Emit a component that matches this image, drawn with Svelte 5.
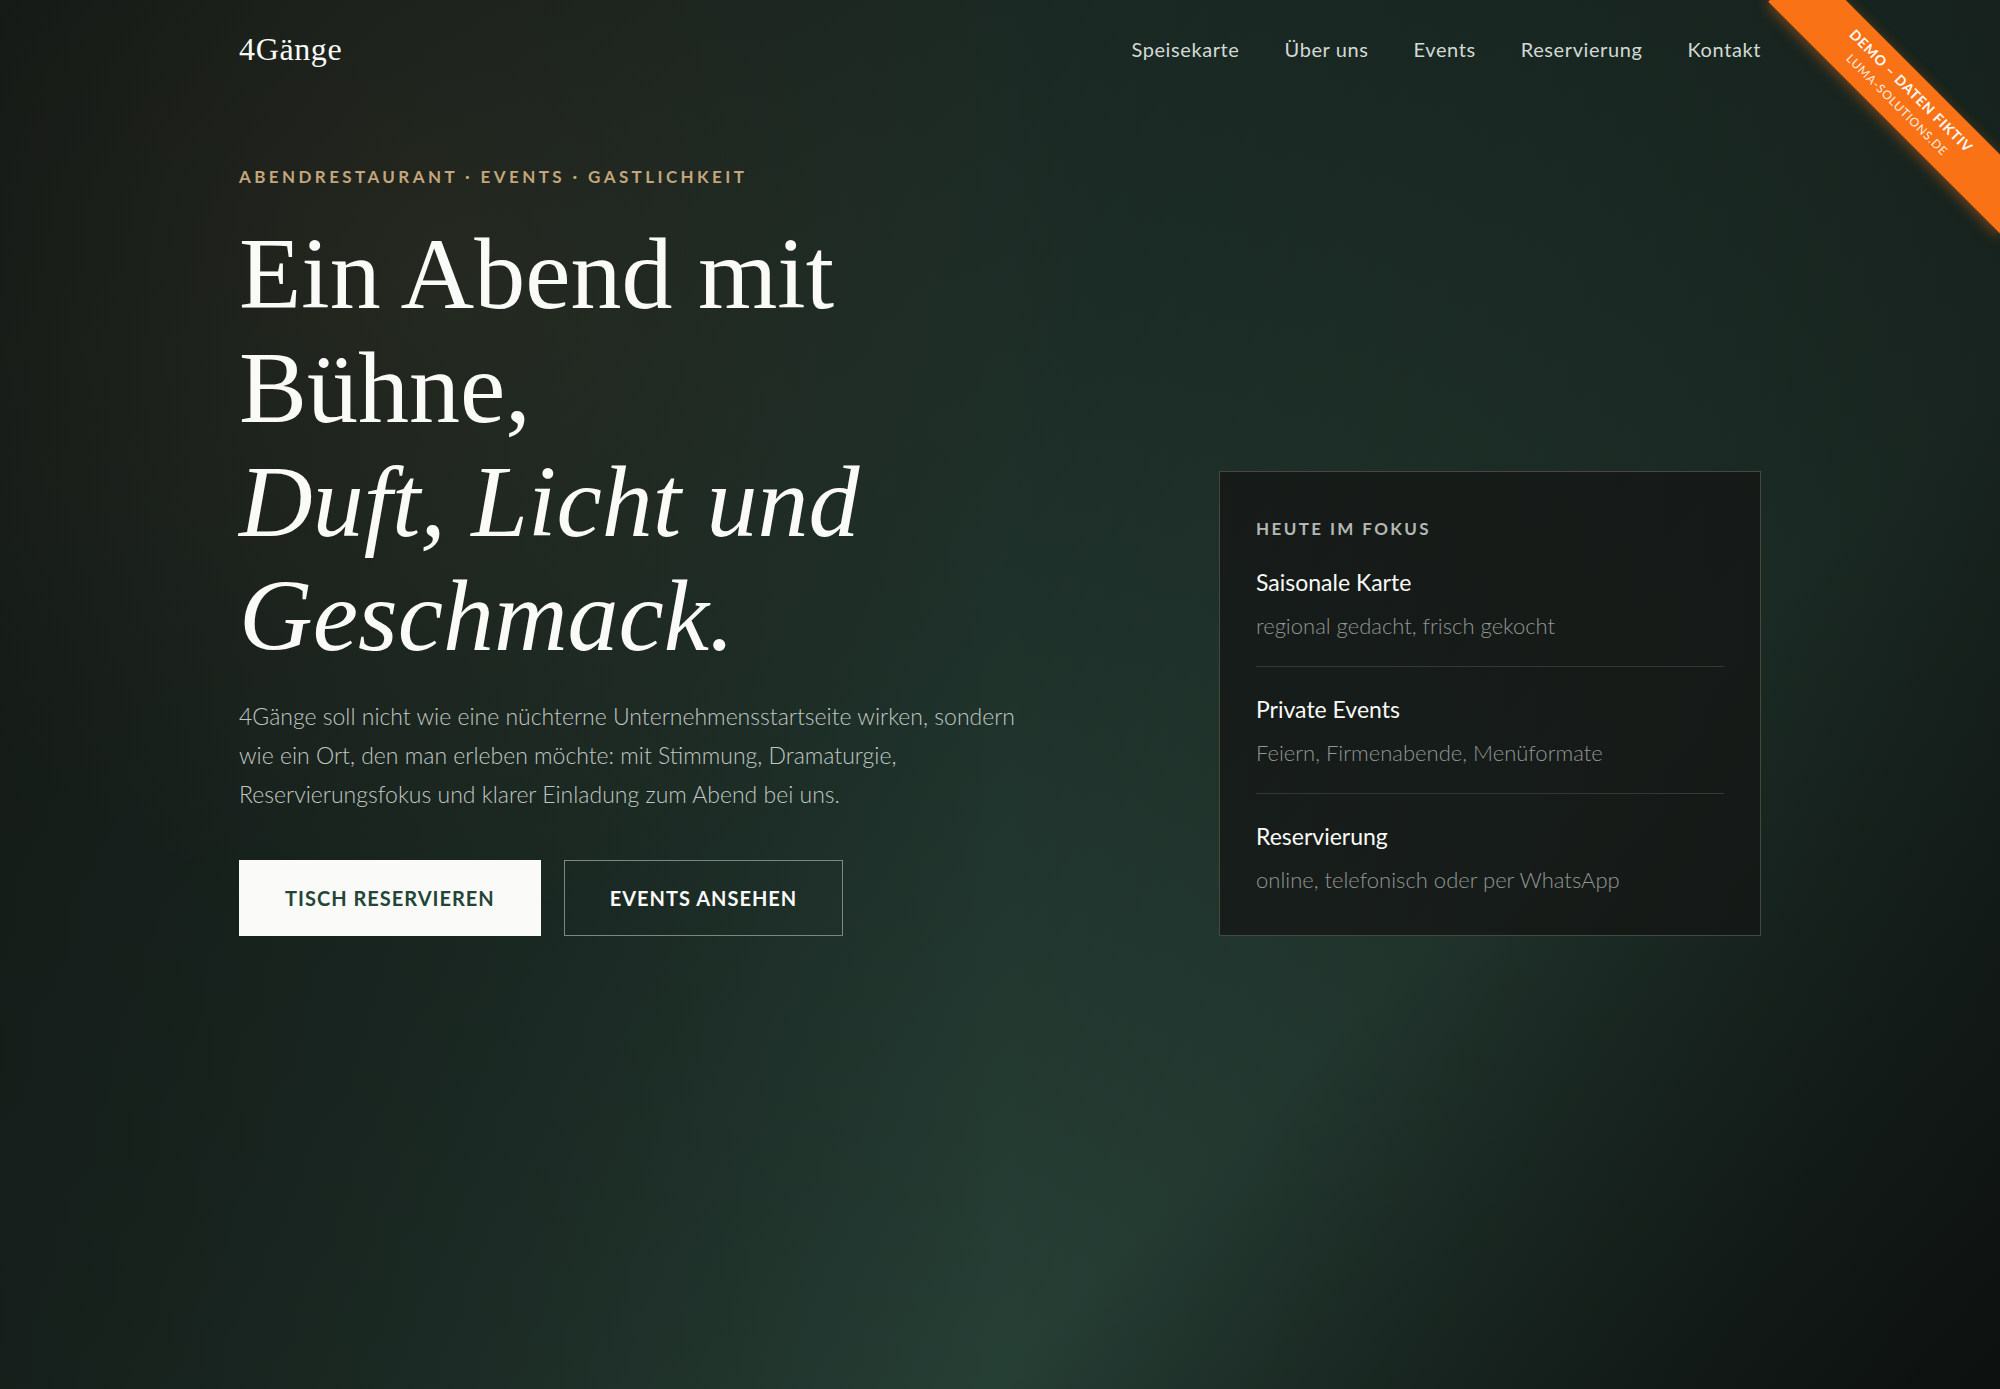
<script>
	const links = ['Speisekarte', 'Über uns', 'Events', 'Reservierung', 'Kontakt'];
	const focus = [
		{ title: 'Saisonale Karte', text: 'regional gedacht, frisch gekocht' },
		{ title: 'Private Events', text: 'Feiern, Firmenabende, Menüformate' },
		{ title: 'Reservierung', text: 'online, telefonisch oder per WhatsApp' }
	];
</script>

<div class="page">
	<header class="container header">
		<a class="logo" href="#start">4Gänge</a>
		<nav>
			{#each links as link}
				<a href="#{link}">{link}</a>
			{/each}
		</nav>
	</header>

	<main class="container hero">
		<div class="intro">
			<p class="eyebrow">Abendrestaurant · Events · Gastlichkeit</p>
			<h1>Ein Abend mit Bühne, <em>Duft, Licht und Geschmack.</em></h1>
			<p class="lead">
				4Gänge soll nicht wie eine nüchterne Unternehmensstartseite wirken, sondern wie ein Ort, den
				man erleben möchte: mit Stimmung, Dramaturgie, Reservierungsfokus und klarer Einladung zum
				Abend bei uns.
			</p>
			<div class="actions">
				<a class="button primary" href="#reservieren">Tisch reservieren</a>
				<a class="button" href="#events">Events ansehen</a>
			</div>
		</div>

		<aside class="card">
			<h2>Heute im Fokus</h2>
			<ul>
				{#each focus as item}
					<li>
						<strong>{item.title}</strong>
						<span>{item.text}</span>
					</li>
				{/each}
			</ul>
		</aside>
	</main>

	<div class="corner">
		<div class="ribbon">
			<b>Demo – Daten fiktiv</b>
			<span>luma-solutions.de</span>
		</div>
	</div>
</div>

<style>
	:global(body) {
		margin: 0;
		background: #111714;
	}
	.page {
		position: relative;
		min-height: 100vh;
		overflow: hidden;
		color: #fafaf8;
		font-family: Lato, 'Liberation Sans', sans-serif;
		background:
			radial-gradient(circle at 22% 20%, rgba(196, 140, 90, 0.08), transparent 34%),
			linear-gradient(90deg, rgba(18, 22, 19, 0.6), transparent 50%, rgba(14, 18, 16, 0.6)),
			linear-gradient(135deg, #151c18 0%, #1c2e27 42%, #263f35 70%, #0b0f0d 100%);
	}
	a {
		color: inherit;
		text-decoration: none;
	}
	.container {
		width: min(1522px, 100% - 64px);
		margin: 0 auto;
	}
	.header {
		display: flex;
		align-items: center;
		justify-content: space-between;
		height: 98px;
	}
	.logo {
		font-family: 'Liberation Serif', serif;
		font-size: 32px;
		letter-spacing: 0.02em;
	}
	nav {
		display: flex;
		gap: 45px;
		font-size: 20px;
		letter-spacing: 0.03em;
		color: #d3d9d5;
	}
	.hero {
		display: grid;
		grid-template-columns: minmax(0, 1fr) minmax(0, 542px);
		gap: 160px;
		align-items: end;
		padding-top: 64px;
	}
	.eyebrow {
		margin: 0 0 25px;
		font-size: 17px;
		line-height: 30px;
		font-weight: 700;
		letter-spacing: 0.2em;
		text-transform: uppercase;
		color: #c4a67c;
	}
	h1 {
		max-width: 740px;
		margin: 0 0 24px;
		font-family: 'Liberation Serif', serif;
		font-size: 102px;
		line-height: 114px;
		font-weight: 400;
	}
	em {
		display: block;
	}
	.lead {
		max-width: 806px;
		margin: 0 0 46px;
		font-size: 23px;
		line-height: 39px;
		font-weight: 300;
		color: #c0c7c3;
	}
	.actions {
		display: flex;
		gap: 23px;
	}
	.button {
		padding: 22px 45px;
		border: 1px solid #7b8882;
		font-size: 20px;
		line-height: 30px;
		font-weight: 700;
		letter-spacing: 0.05em;
		text-transform: uppercase;
	}
	.primary {
		border-color: #fafaf8;
		background: #fafaf8;
		color: #234538;
	}
	.card {
		padding: 36px;
		border: 1px solid #46473f;
		background: rgba(20, 22, 20, 0.75);
	}
	h2 {
		margin: 0;
		font-size: 17px;
		line-height: 41px;
		font-weight: 700;
		letter-spacing: 0.14em;
		text-transform: uppercase;
		color: #b4b8b5;
	}
	ul {
		margin: 0;
		padding: 0;
		list-style: none;
	}
	li {
		display: grid;
		gap: 6px;
		padding: 23px 0 21px;
		border-bottom: 1px solid #343937;
		line-height: 38px;
	}
	li:first-child {
		padding-top: 14px;
	}
	li:last-child {
		padding-bottom: 0;
		border-bottom: 0;
	}
	strong {
		font-size: 23px;
		font-weight: 400;
	}
	li span {
		font-size: 22px;
		font-weight: 300;
		color: #929694;
	}
	.corner {
		position: absolute;
		top: 0;
		right: 0;
		width: 260px;
		height: 280px;
		overflow: hidden;
	}
	.ribbon {
		position: absolute;
		top: 70px;
		right: -68px;
		width: 328px;
		padding: 8px 0;
		background: #f97316;
		box-shadow: 0 3px 14px rgba(249, 115, 22, 0.4);
		letter-spacing: 0.05em;
		line-height: 20px;
		text-align: center;
		text-transform: uppercase;
		transform: rotate(45deg);
	}
	.ribbon b,
	.ribbon span {
		display: block;
	}
	.ribbon b {
		font-size: 14px;
	}
	.ribbon span {
		font-size: 12px;
		opacity: 0.9;
	}
</style>
